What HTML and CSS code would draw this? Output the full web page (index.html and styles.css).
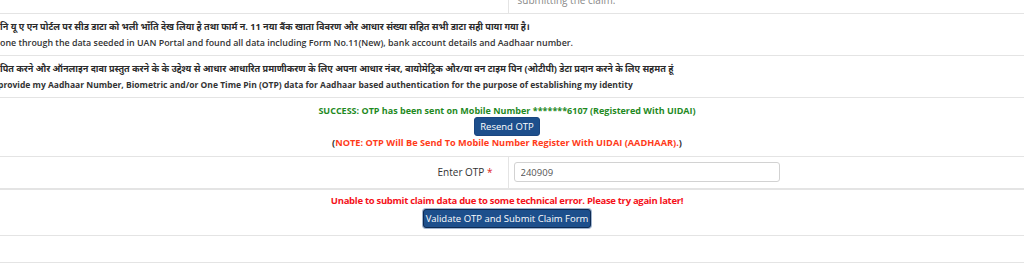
FILE: index.html
```html
<!DOCTYPE html>
<html lang="en">
<head>
    <meta charset="UTF-8">
    <meta name="viewport" content="width=device-width, initial-scale=1.0">
    <title>Claim Submission - OTP</title>
    <link rel="stylesheet" href="styles.css">
</head>
<body>
    <div class="claim-form">
        <table class="claim-table">
            <tr class="row-top">
                <td class="label-col"></td>
                <td class="value-col"><span class="hint">submitting the claim.</span></td>
            </tr>
            <tr class="row-declare">
                <td colspan="2">
                    <div class="hindi">नि यू ए एन पोर्टल पर सीड डाटा को भली भाँति देख लिया है तथा फार्म न. 11 नया बैंक खाता विवरण और आधार संख्या सहित सभी डाटा सही पाया गया है।</div>
                    <div class="eng semi">one through the data seeded in UAN Portal and found all data including Form No.11(New), bank account details and Aadhaar number.</div>
                </td>
            </tr>
            <tr class="row-declare">
                <td colspan="2">
                    <div class="hindi">पित करने और ऑनलाइन दावा प्रस्तुत करने के के उद्देश्य से आधार आधारित प्रमाणीकरण के लिए अपना आधार नंबर, बायोमेट्रिक और/या वन टाइम पिन (ओटीपी) डेटा प्रदान करने के लिए सहमत हूं</div>
                    <div class="eng bold cut">provide my Aadhaar Number, Biometric and/or One Time Pin (OTP) data for Aadhaar based authentication for the purpose of establishing my identity</div>
                </td>
            </tr>
            <tr class="row-otp-status">
                <td colspan="2" class="center">
                    <div class="msg-success">SUCCESS: OTP has been sent on Mobile Number *******6107 (Registered With UIDAI)</div>
                    <button class="btn-primary btn-resend">Resend OTP</button>
                    <div class="msg-note">(<span>NOTE: OTP Will Be Send To Mobile Number Register With UIDAI (AADHAAR).</span>)</div>
                </td>
            </tr>
            <tr class="row-otp">
                <td class="label-col otp-label">Enter OTP <span class="req">*</span></td>
                <td class="value-col"><input type="text" class="otp-input" value="240909"></td>
            </tr>
            <tr class="row-submit">
                <td colspan="2" class="center">
                    <div class="msg-error">Unable to submit claim data due to some technical error. Please try again later!</div>
                    <button class="btn-primary btn-submit">Validate OTP and Submit Claim Form</button>
                </td>
            </tr>
            <tr class="row-empty">
                <td colspan="2"></td>
            </tr>
            <tr class="row-last">
                <td colspan="2"></td>
            </tr>
        </table>
    </div>
</body>
</html>
```

FILE: styles.css
```css
* {
    margin: 0;
    padding: 0;
    box-sizing: border-box;
}

body {
    background-color: #fff;
    color: #333;
    font-family: 'Open Sans', 'Noto Sans', 'Noto Sans Devanagari', sans-serif;
    font-size: 10px;
    overflow: hidden;
}

.claim-form {
    margin-top: -8px;
}

.claim-table {
    width: 100%;
    border-collapse: collapse;
}

.claim-table td {
    border-top: 1px solid #e4e4e4;
    vertical-align: middle;
}

.label-col {
    width: 508px;
}

.value-col {
    border-left: 1px solid #e4e4e4;
}

/* top row, mostly scrolled away */
.row-top td {
    height: 21px;
    border-top: none;
    vertical-align: bottom;
}

.hint {
    display: block;
    padding: 0 0 6px 9px;
    color: #888;
    font-size: 10px;
    line-height: 14px;
}

/* declaration rows */
.row-declare td {
    height: 42px;
    padding: 2px 0;
    white-space: nowrap;
}

.hindi {
    font-weight: bold;
    font-size: 9.1px;
    line-height: 17px;
    color: #2b2b2b;
}

.eng {
    line-height: 16px;
    color: #333;
}

.eng.semi {
    font-size: 8.9px;
    font-weight: 600;
}

.eng.bold {
    font-size: 8.5px;
    font-weight: 700;
}

.cut {
    margin-left: -2px;
}

/* centered message rows */
.center {
    text-align: center;
    padding-right: 10px;
}

.row-otp-status td {
    height: 59px;
}

.msg-success {
    color: #1f8a1f;
    font-weight: bold;
    font-size: 9px;
    line-height: 13px;
}

.msg-note {
    color: #333;
    font-weight: bold;
    font-size: 9.2px;
    line-height: 14px;
}

.msg-note span {
    color: #ff3b1a;
}

.btn-primary {
    background-color: #1d4f8c;
    color: #fff;
    border: 1px solid #1a4680;
    border-radius: 3px;
    font-family: 'Open Sans', sans-serif;
    font-size: 9.5px;
    height: 19px;
    padding: 0;
    white-space: nowrap;
    cursor: pointer;
    vertical-align: middle;
}

.btn-resend {
    width: 66px;
}

.btn-submit {
    width: 168px;
    border: 1px solid #0d2a52;
    box-shadow: 0 0 0 1px #9fb4cf;
}

/* OTP input row */
.row-otp td {
    height: 33px;
}

.otp-label {
    text-align: right;
    padding-right: 15px;
    font-size: 10px;
    color: #333;
}

.req {
    color: #e02020;
}

.otp-input {
    display: block;
    margin-left: 5px;
    width: 266px;
    height: 20px;
    border: 1px solid #d2d2d2;
    border-radius: 3px;
    padding: 0 6px;
    font-family: 'Open Sans', sans-serif;
    font-size: 9.5px;
    color: #555;
}

/* submit row */
.row-submit td {
    height: 46px;
    border-top: 2px solid #e4e4e4;
    padding-bottom: 4px;
}

.msg-error {
    color: #f5121a;
    font-weight: bold;
    font-size: 9.5px;
    line-height: 16px;
    letter-spacing: -0.3px;
}

.row-empty td {
    height: 27px;
}

.row-last td {
    height: 30px;
}
```
